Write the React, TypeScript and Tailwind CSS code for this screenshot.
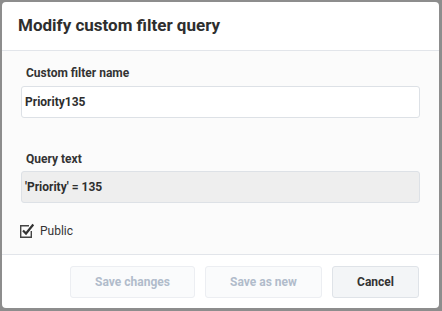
import React from 'react';

export default function App() {
  return (
    <div className="w-[442px] h-[311px] bg-[#8d8d8d] p-[2px] pr-[3px] pb-[3px]" style={{ fontFamily: 'Roboto, "Liberation Sans", sans-serif' }}>
      <div className="w-full h-full bg-white rounded-[4px] overflow-hidden flex flex-col">
        {/* Header */}
        <div className="h-[49px] flex items-center px-[16px] border-b border-[#e2e5ea]">
          <h1 className="text-[17px] font-bold text-[#2e2e2e]">Modify custom filter query</h1>
        </div>

        {/* Body */}
        <div className="flex-1 bg-[#fbfbfb] px-[19px] pt-[14px] flex flex-col">
          <label className="pl-[5px] text-[12px] font-bold text-[#333] leading-[16px]">Custom filter name</label>
          <div className="mt-[5px] h-[32px] bg-white border border-[#dde1e6] rounded-[3px] flex items-center px-[3px]">
            <span className="text-[12px] font-bold text-[#2e2e2e]">Priority135</span>
          </div>

          <label className="mt-[33px] pl-[5px] text-[12px] font-bold text-[#333] leading-[16px]">Query text</label>
          <div className="mt-[4px] h-[32px] bg-[#eeeeee] border border-[#dde1e6] rounded-[3px] flex items-center px-[3px]">
            <span className="text-[12px] font-bold text-[#2e2e2e]">'Priority' = 135</span>
          </div>

          <div className="mt-[19px] flex items-center gap-[5px] -ml-[2px]">
            <svg width="16" height="16" viewBox="0 0 16 16">
              <path d="M10 2.7 H1.7 V14.3 H12.3 V8" fill="none" stroke="#444" strokeWidth="1.4" />
              <path d="M4 7.5 L7 10.5 L14.3 1.5" fill="none" stroke="#333" strokeWidth="2.2" />
            </svg>
            <span className="text-[12px] text-[#333]">Public</span>
          </div>
        </div>

        {/* Footer */}
        <div className="h-[54px] border-t border-[#e2e5ea] flex items-start justify-end gap-[10px] pr-[20px] pt-[11px]">
          <button className="w-[125px] h-[32px] rounded-[3px] border border-[#eceef2] bg-[#fafbfc] text-[12px] font-bold text-[#b1bccb]">Save changes</button>
          <button className="w-[117px] h-[32px] rounded-[3px] border border-[#eceef2] bg-[#fafbfc] text-[12px] font-bold text-[#b1bccb]">Save as new</button>
          <button className="w-[87px] h-[32px] rounded-[3px] border border-[#dfe3e8] bg-[#f3f5f7] text-[12px] font-bold text-[#333]">Cancel</button>
        </div>
      </div>
    </div>
  );
}
